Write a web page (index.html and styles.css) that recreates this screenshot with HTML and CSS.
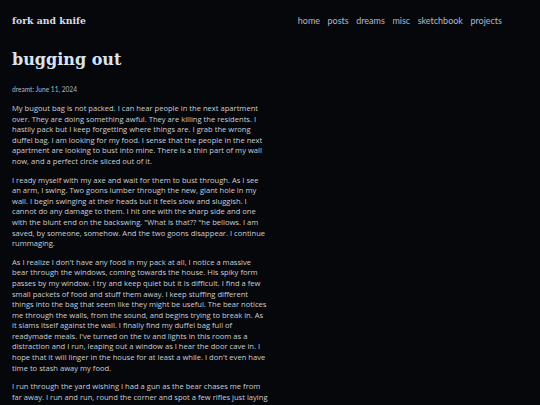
FILE: index.html
```html
<!DOCTYPE html>
<html lang="en">
<head>
<meta charset="utf-8">
<title>bugging out</title>
<link rel="stylesheet" href="styles.css">
</head>
<body>
<header class="site-header">
  <a class="site-title" href="#">fork and knife</a>
  <nav class="site-nav">
    <a href="#">home</a>
    <a href="#">posts</a>
    <a href="#">dreams</a>
    <a href="#">misc</a>
    <a href="#">sketchbook</a>
    <a href="#">projects</a>
  </nav>
</header>
<main class="post">
  <h1 class="post-title">bugging out</h1>
  <p class="post-meta">dreamt: June 11, 2024</p>
  <div class="post-body">
    <p>My bugout bag is not packed. I can hear people in the next apartment over. They are doing something awful. They are killing the residents. I hastily pack but I keep forgetting where things are. I grab the wrong duffel bag. I am looking for my food. I sense that the people in the next apartment are looking to bust into mine. There is a thin part of my wall now, and a perfect circle sliced out of it.</p>
    <p>I ready myself with my axe and wait for them to bust through. As I see an arm, I swing. Two goons lumber through the new, giant hole in my wall. I begin swinging at their heads but it feels slow and sluggish. I cannot do any damage to them. I hit one with the sharp side and one with the blunt end on the backswing. "What is that?? "he bellows. I am saved, by someone, somehow. And the two goons disappear. I continue rummaging.</p>
    <p>As I realize I don't have any food in my pack at all, I notice a massive bear through the windows, coming towards the house. His spiky form passes by my window. I try and keep quiet but it is difficult. I find a few small packets of food and stuff them away. I keep stuffing different things into the bag that seem like they might be useful. The bear notices me through the walls, from the sound, and begins trying to break in. As it slams itself against the wall. I finally find my duffel bag full of readymade meals. I've turned on the tv and lights in this room as a distraction and I run, leaping out a window as I hear the door cave in. I hope that it will linger in the house for at least a while. I don't even have time to stash away my food.</p>
    <p>I run through the yard wishing I had a gun as the bear chases me from far away. I run and run, round the corner and spot a few rifles just laying there. One is an AR, and one is some kind of sniper, a huge one, what looks like a fifty cal. I grab them both and keep running.</p>
  </div>
</main>
</body>
</html>
```
FILE: styles.css
```css
html, body {
  margin: 0;
  padding: 0;
  background: #06070b;
}

body {
  color: #c9ced6;
  font-family: "Open Sans", "Lato", sans-serif;
}

a {
  text-decoration: none;
  color: inherit;
}

.site-header {
  display: flex;
  justify-content: space-between;
  align-items: center;
  padding: 14px 38px 0 12px;
  height: 12px;
}

.site-title {
  font-family: "DejaVu Serif", serif;
  font-weight: bold;
  font-size: 9.3px;
  color: #d6dde8;
}

.site-nav {
  display: flex;
  gap: 7.5px;
  font-family: "Lato", sans-serif;
  font-size: 9px;
}

.site-nav a {
  color: #aeb9cc;
}

.post {
  padding: 0 12px;
  max-width: 256px;
}

.post-title {
  font-family: "DejaVu Serif", serif;
  font-weight: bold;
  font-size: 16px;
  color: #d8e4f2;
  margin: 23px 0 0;
  line-height: 22px;
}

.post-meta {
  font-family: "Lato", sans-serif;
  font-size: 6.6px;
  color: #b0b6bf;
  margin: 14px 0 0;
}

.post-body p {
  font-size: 7.6px;
  line-height: 10.6px;
  margin: 8px 0 0;
}

.post-body p:first-child {
  margin-top: 10px;
}
```
